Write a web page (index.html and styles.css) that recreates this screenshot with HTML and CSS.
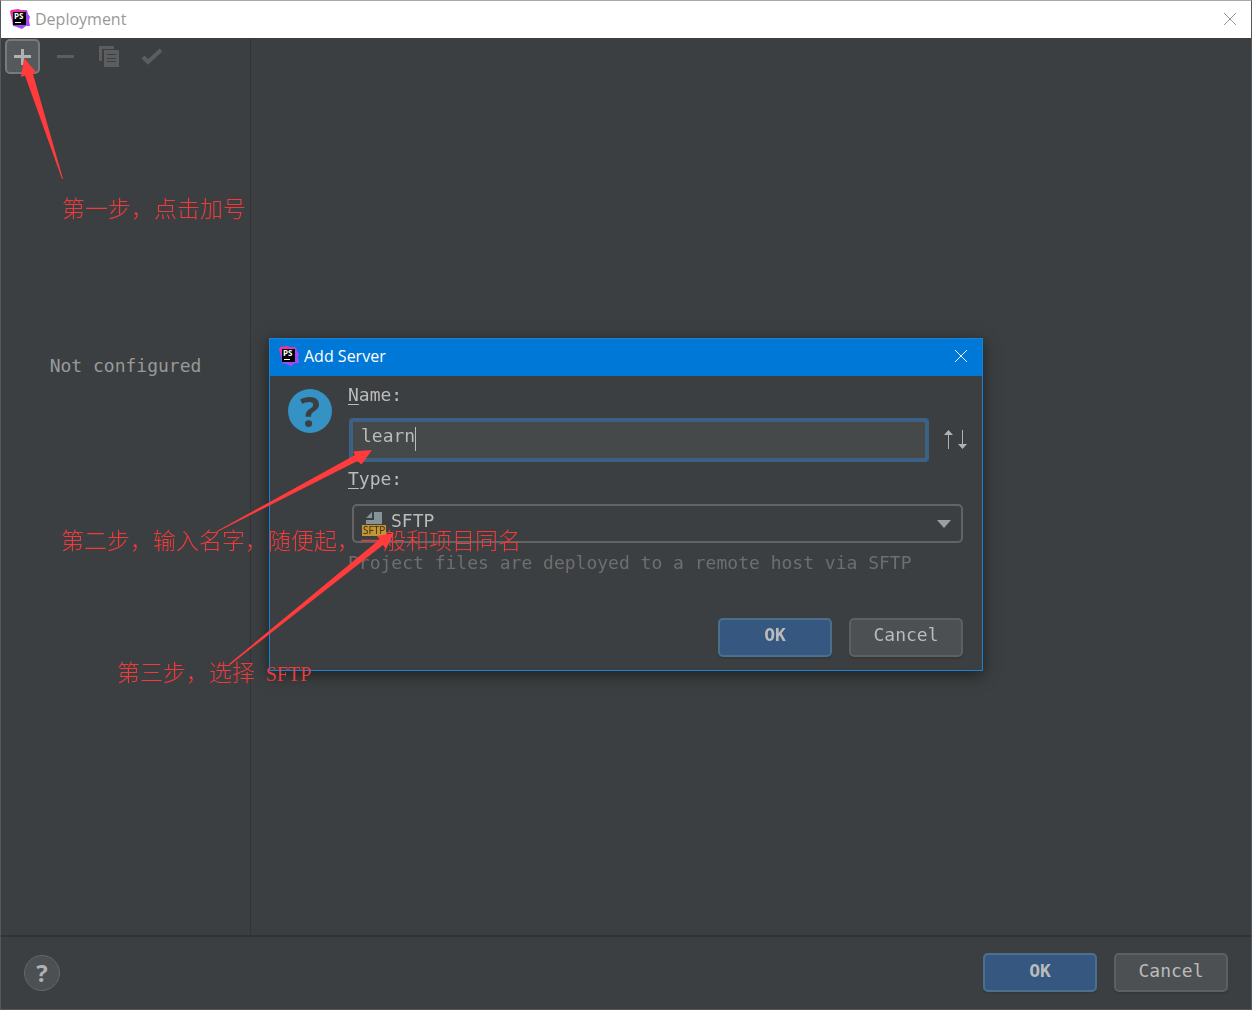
FILE: index.html
```html
<!DOCTYPE html>
<html lang="en">
<head>
<meta charset="utf-8">
<title>Deployment</title>
<link rel="stylesheet" href="styles.css">
</head>
<body>
<svg class="defs" width="0" height="0" aria-hidden="true">
  <defs>
    <linearGradient id="logo-fill" x1="0" y1="0" x2="1" y2="1">
      <stop offset="0" stop-color="#ff318c"/>
      <stop offset="0.35" stop-color="#e035b4"/>
      <stop offset="0.5" stop-color="#9a4bf5"/>
      <stop offset="1" stop-color="#b345f1"/>
    </linearGradient>
    <symbol id="logo" viewBox="0 0 20 20">
      <path fill="url(#logo-fill)" d="M1 1 8 0l3 1 6 0 1 4 2 3-1 3 1 6-4 0-4 3-5-2-4-1-1-6-1-4-1-4z"/>
      <path fill="#000" d="M3 3h13v13H3z"/>
      <text class="logo-text" x="4" y="10">PS</text>
      <path fill="#fff" d="M5 13h6v1H5z"/>
    </symbol>
  </defs>
</svg>

<div class="window">
  <header class="titlebar">
    <svg class="logo"><use href="#logo"/></svg>
    <h1 class="title">Deployment</h1>
    <button class="close" aria-label="Close">
      <svg width="14" height="14" viewBox="0 0 14 14"><path d="M1 1l12 12M13 1L1 13"/></svg>
    </button>
  </header>

  <main class="content">
    <aside class="sidebar">
      <div class="toolbar">
        <button class="tool tool-active" aria-label="Add">
          <svg width="19" height="19" viewBox="0 0 19 19"><path fill="#afb1b3" d="M8 2h3v6h7v3h-7v7H8v-7H1V8h7z"/></svg>
        </button>
        <button class="tool" aria-label="Remove" disabled>
          <svg width="19" height="19" viewBox="0 0 19 19"><path fill="#5b5d5f" d="M1 8h17v3H1z"/></svg>
        </button>
        <button class="tool" aria-label="Copy" disabled>
          <svg width="20" height="21" viewBox="0 0 20 21"><path fill="#5b5d5f" d="M0 0h15v3H3v12H0z"/><path fill="#5b5d5f" fill-rule="evenodd" d="M5 4h15v17H5zM8 8v1h9V8zM8 12v1h9v-1zM8 15v1h9v-1z"/></svg>
        </button>
        <button class="tool" aria-label="Use as default" disabled>
          <svg width="22" height="20" viewBox="0 0 22 20"><path fill="none" stroke="#5b5d5f" stroke-width="4" d="M2 10l5 5L20 3"/></svg>
        </button>
      </div>
      <p class="empty">Not configured</p>
    </aside>
    <section class="details" aria-label="Server details"></section>
  </main>

  <footer class="footer">
    <button class="help" aria-label="Help">?</button>
    <div class="actions">
      <button class="btn btn-primary">OK</button>
      <button class="btn">Cancel</button>
    </div>
  </footer>
</div>

<div class="overlay">
  <form class="dialog" role="dialog" aria-labelledby="dialog-title">
    <header class="titlebar dialog-titlebar">
      <svg class="logo"><use href="#logo"/></svg>
      <h2 class="title" id="dialog-title">Add Server</h2>
      <button type="button" class="close" aria-label="Close">
        <svg width="14" height="14" viewBox="0 0 14 14"><path d="M1 1l12 12M13 1L1 13"/></svg>
      </button>
    </header>
    <div class="dialog-body">
      <span class="question" aria-hidden="true">?</span>
      <div class="fields">
        <label class="label" for="name"><u>N</u>ame:</label>
        <div class="name-row">
          <div class="name-box">
            <input class="name" id="name" type="text" value="learn">
            <span class="caret"></span>
          </div>
          <svg class="sort" width="23" height="20" viewBox="0 0 23 20"><path fill="none" stroke="#afb1b3" stroke-width="1" d="M4.500 4v15M18.500 0v15"/><path fill="#afb1b3" d="M4.500 0L9 5H0zM18.500 19L23 14h-9z"/></svg>
        </div>
        <label class="label" for="type"><u>T</u>ype:</label>
        <div class="type-box">
          <select class="type" id="type"><option>SFTP</option></select>
          <svg class="type-icon" width="24" height="24" viewBox="0 0 24 24"><path fill="#87939a" d="M4 6l6-6v6zM12 0h8v12H4V8h8z"/><path fill="#c29436" d="M0 13h24v11H0z"/><text class="type-tag" x="1" y="22">SFTP</text></svg>
          <svg class="type-arrow" width="14" height="8" viewBox="0 0 14 8"><path fill="#9c9fa1" d="M0 0h14L7 8z"/></svg>
        </div>
        <p class="hint">Project files are deployed to a remote host via SFTP</p>
        <div class="actions dialog-actions">
          <button type="button" class="btn btn-primary">OK</button>
          <button type="button" class="btn">Cancel</button>
        </div>
      </div>
    </div>
  </form>
</div>

<div class="notes" lang="zh-CN">
  <p class="note note-1">第一步，点击加号</p>
  <p class="note note-2">第二步，输入名字，随便起，一般和项目同名</p>
  <p class="note note-3">第三步，选择<span class="latin"> SFTP</span></p>
  <svg class="arrows" width="540" height="700" viewBox="0 0 540 700">
    <path d="M24 58L36 72l-3 2L63 179h-1L25 75.500 21 77z"/>
    <path d="M372 450l-10.500 14.500-4-3.500L217 532v-1L355 455l-2-3.500z"/>
    <path d="M394 533l-8 16-3-4L230 665l-1-1L379.500 539.500 377 536z"/>
  </svg>
</div>
</body>
</html>
```
FILE: styles.css
```css
* {
  box-sizing: border-box;
}

body {
  margin: 0;
  background: #3c3f41;
  color: #bbbbbb;
  font: 18px/24px "DejaVu Sans Mono", monospace;
}

h1, h2, p {
  margin: 0;
}

button, input, select {
  font: inherit;
  color: inherit;
}

.defs {
  position: absolute;
}

/* Main window */
.window {
  display: flex;
  flex-direction: column;
  min-height: 100vh;
  border: 1px solid #55585a;
  border-top-color: #a9a9a9;
}

.titlebar {
  display: flex;
  align-items: center;
  gap: 5px;
  height: 37px;
  padding: 0 14px 2px 9px;
  background: #ffffff;
  color: #999999;
}

.logo {
  width: 20px;
  height: 20px;
}

.logo-text {
  font: bold 8px "Open Sans", sans-serif;
  fill: #ffffff;
}

.title {
  flex: 1;
  font: 16px/24px "Open Sans", sans-serif;
}

.close {
  display: flex;
  padding: 0;
  border: 0;
  background: none;
}

.close path {
  fill: none;
  stroke: currentColor;
}

.content {
  display: flex;
  flex: 1;
}

.sidebar {
  width: 250px;
  border-right: 1px solid #323435;
}

.toolbar {
  display: flex;
  gap: 8px;
  padding: 1px 4px;
}

.tool {
  display: grid;
  place-items: center;
  width: 35px;
  height: 35px;
  padding: 0;
  border: 2px solid transparent;
  border-radius: 5px;
  background: none;
}

.tool-active {
  border-color: #777b7d;
  background: #55595c;
}

.empty {
  padding-top: 279px;
  text-align: center;
  color: #999999;
}

.details {
  flex: 1;
}

.footer {
  display: flex;
  align-items: center;
  justify-content: space-between;
  height: 74px;
  padding: 0 23px 1px;
  border-top: 2px solid #323232;
}

.help {
  width: 36px;
  height: 36px;
  padding: 0;
  border: 1px solid #646769;
  border-radius: 50%;
  background: #4c5052;
  color: #afb1b3;
  font: bold 24px/32px "Open Sans", sans-serif;
}

.actions {
  display: flex;
  gap: 17px;
}

.btn {
  width: 114px;
  height: 39px;
  padding: 0 0 4px;
  border: 2px solid #5e6060;
  border-radius: 5px;
  background: #4c5052;
  box-shadow: 0 2px 1px #36393a;
}

.btn-primary {
  border-color: #4c708c;
  background: #365880;
  font-weight: bold;
}

/* Add Server dialog */
.overlay {
  position: fixed;
  inset: 0;
  display: grid;
  place-items: center;
  padding-bottom: 2px;
}

.dialog {
  width: 714px;
  max-width: 100%;
  border: 1px solid #1883d7;
  background: #3c3f41;
  box-shadow: 0 4px 14px rgba(0, 0, 0, 0.5);
}

.dialog-titlebar {
  background: #0078d7;
  color: #ffffff;
}

.dialog-body {
  display: flex;
  gap: 16px;
  padding: 7px 15px 13px 18px;
}

.question {
  width: 44px;
  height: 44px;
  margin-top: 6px;
  border-radius: 50%;
  background: #3592c4;
  color: #3c3f41;
  font: bold 42px/44px "Open Sans", sans-serif;
  text-align: center;
}

.fields {
  flex: 1;
}

.label {
  display: block;
}

.label u {
  text-underline-offset: 3px;
}

.name-row {
  display: flex;
  align-items: center;
  gap: 15px;
  margin: 11px 0 5px 1px;
}

.name-box {
  position: relative;
  flex: 1;
}

.name {
  display: block;
  width: 100%;
  height: 44px;
  padding: 0 8px 8px;
  border: 4px solid #3d6185;
  border-radius: 4px;
  outline: none;
  background: #45494a;
}

.caret {
  position: absolute;
  top: 9px;
  left: 66px;
  width: 1px;
  height: 24px;
  background: #bbbbbb;
}

.type-box {
  position: relative;
  margin: 13px 4px 8px;
}

.type {
  display: block;
  width: 100%;
  height: 39px;
  padding: 0 32px 4px 37px;
  border: 2px solid #646464;
  border-radius: 5px;
  appearance: none;
  background: none;
}

.type-icon {
  position: absolute;
  top: 8px;
  left: 10px;
}

.type-tag {
  font: 10px "Open Sans", sans-serif;
  fill: #3a2c10;
}

.type-arrow {
  position: absolute;
  top: 16px;
  right: 12px;
  pointer-events: none;
}

.hint {
  color: #6e6e6e;
  white-space: nowrap;
}

.dialog-actions {
  justify-content: flex-end;
  margin: 43px 4px 0;
}

/* Step annotations drawn over the windows */
.notes {
  position: absolute;
  inset: 0;
  pointer-events: none;
  color: #f23a3a;
  font: 300 23px/32px "Noto Sans CJK SC", sans-serif;
}

.note {
  position: absolute;
  white-space: pre;
}

.note-1 {
  top: 191px;
  left: 62px;
}

.note-2 {
  top: 523px;
  left: 61px;
}

.note-3 {
  top: 655px;
  left: 117px;
}

.latin {
  padding-left: 6px;
  font: 20px "Liberation Serif", serif;
}

.arrows {
  position: absolute;
  top: 0;
  left: 0;
  fill: #ff3b3b;
}
```
